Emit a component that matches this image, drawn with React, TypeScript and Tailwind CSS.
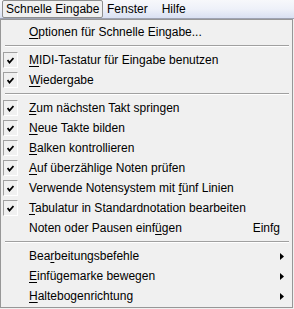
import React from 'react';

type Item =
  | { kind: 'sep' }
  | { kind: 'item'; label: React.ReactNode; checked?: boolean; shortcut?: string; submenu?: boolean };

const U = ({ children }: { children: React.ReactNode }) => <span className="underline underline-offset-2">{children}</span>;

const items: Item[] = [
  { kind: 'item', label: <><U>O</U>ptionen für Schnelle Eingabe...</> },
  { kind: 'sep' },
  { kind: 'item', checked: true, label: <><U>M</U>IDI-Tastatur für Eingabe benutzen</> },
  { kind: 'item', checked: true, label: <><U>W</U>iedergabe</> },
  { kind: 'sep' },
  { kind: 'item', checked: true, label: <><U>Z</U>um nächsten Takt springen</> },
  { kind: 'item', checked: true, label: <><U>N</U>eue Takte bilden</> },
  { kind: 'item', checked: true, label: <><U>B</U>alken kontrollieren</> },
  { kind: 'item', checked: true, label: <><U>A</U>uf überzählige Noten prüfen</> },
  { kind: 'item', checked: true, label: <>Verwende Notensystem mit <U>f</U>ünf Linien</> },
  { kind: 'item', checked: true, label: <><U>T</U>abulatur in Standardnotation bearbeiten</> },
  { kind: 'item', label: <>Noten oder Pausen einf<U>ü</U>gen</>, shortcut: 'Einfg' },
  { kind: 'sep' },
  { kind: 'item', submenu: true, label: <>Bea<U>r</U>beitungsbefehle</> },
  { kind: 'item', submenu: true, label: <><U>E</U>infügemarke bewegen</> },
  { kind: 'item', submenu: true, label: <><U>H</U>altebogenrichtung</> },
];

const Check = () => (
  <div className="w-[15px] h-[16px] ml-[2px] border-t border-l border-[#a0a0a0] border-b border-r border-b-white border-r-white bg-[#f0f0f0] flex items-center justify-center">
    <svg width="7" height="7" viewBox="0 0 7 7">
      <path d="M0.5 3 L2.5 5.5 L6.5 1" stroke="#000" strokeWidth="1.8" fill="none" />
    </svg>
  </div>
);

export default function App() {
  return (
    <div className="w-[294px] h-[309px] bg-[#f0f0f0] overflow-hidden text-[12px] text-black" style={{ fontFamily: 'Tahoma, "Liberation Sans", "DejaVu Sans", sans-serif' }}>
      <div className="h-[19px] bg-gradient-to-b from-[#f7f8fb] via-[#eef1f9] to-[#d9e0f2] border-b border-[#9ea3b3] flex items-end">
        <div className="ml-[2px] w-[101px] h-[18px] pl-[3px] border border-[#8e8f8f] rounded-[2px] bg-[#f0f0f0] flex items-center">Schnelle Eingabe</div>
        <div className="ml-[4px] h-[18px] flex items-center">Fenster</div>
        <div className="ml-[14px] h-[18px] flex items-center">Hilfe</div>
      </div>
      <div className="w-[293px] h-[289px] border border-[#979797] flex flex-col pt-[2px]">
        {items.map((it, i) =>
          it.kind === 'sep' ? (
            <div key={i} className="h-[8px] flex items-center pl-[4px] pr-[3px]">
              <div className="w-full h-[2px] border-t border-[#a0a0a0] border-b border-b-white" />
            </div>
          ) : (
            <div key={i} className="h-[20px] flex items-center shrink-0">
              <div className="w-[28px] flex items-center">{it.checked && <Check />}</div>
              <div className="flex-1 whitespace-nowrap">{it.label}</div>
              {it.shortcut && <div className="mr-[12px]">{it.shortcut}</div>}
              {it.submenu && (
                <svg className="mr-[8px]" width="4" height="7" viewBox="0 0 4 7">
                  <path d="M0 0 L4 3.5 L0 7 Z" fill="#000" />
                </svg>
              )}
            </div>
          )
        )}
      </div>
    </div>
  );
}
